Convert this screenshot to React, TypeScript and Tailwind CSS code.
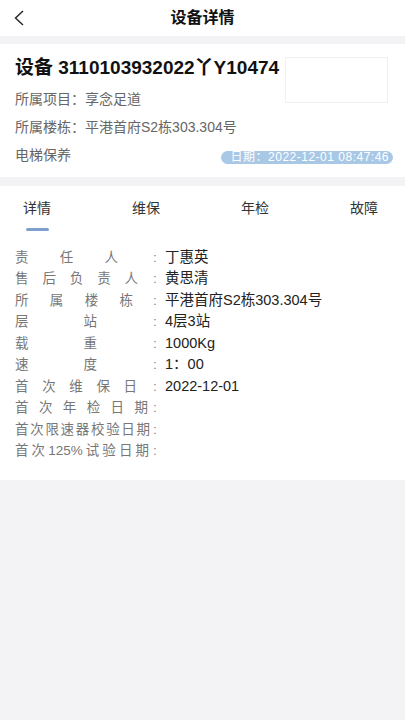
const rows: { chars: string[]; w: number; value: string }[] = [
  { chars: ['责', '任', '人'], w: 103, value: '丁惠英' },
  { chars: ['售', '后', '负', '责', '人'], w: 123, value: '黄思清' },
  { chars: ['所', '属', '楼', '栋'], w: 118, value: '平港首府S2栋303.304号' },
  { chars: ['层', '站'], w: 82, value: '4层3站' },
  { chars: ['载', '重'], w: 82, value: '1000Kg' },
  { chars: ['速', '度'], w: 82, value: '1：00' },
  { chars: ['首', '次', '维', '保', '日'], w: 122, value: '2022-12-01' },
  { chars: ['首', '次', '年', '检', '日', '期'], w: 133, value: '' },
  { chars: ['首', '次', '限', '速', '器', '校', '验', '日', '期'], w: 135, value: '' },
  { chars: ['首', '次', '125%', '试', '验', '日', '期'], w: 134, value: '' },
];

const tabs = ['详情', '维保', '年检', '故障'];

export default function App() {
  return (
    <div
      className="min-h-[720px] w-[405px] bg-[#f3f3f6] text-[#222]"
      style={{ fontFamily: '"Liberation Sans", "Noto Sans CJK SC", sans-serif' }}
    >
      {/* Header */}
      <div className="relative flex h-[36px] items-center justify-center bg-white">
        <svg className="absolute left-[12px] top-[9px]" width="14" height="18" viewBox="0 0 14 18" fill="none">
          <path d="M11 2 L3.5 9 L11 16" stroke="#222" strokeWidth="1.4" strokeLinejoin="miter" />
        </svg>
        <h1 className="text-[16px] font-bold leading-none text-[#111]">设备详情</h1>
      </div>

      {/* Device card */}
      <div className="relative mt-[8px] bg-white px-[15px] pt-[12px] pb-[8px]">
        <div className="absolute left-[285px] top-[13px] h-[46px] w-[103px] border border-[#f1f1f3]" />
        <div className="h-[24px] text-[19px] font-bold leading-[24px] text-[#111]">设备 3110103932022丫Y10474</div>
        <div className="mt-[5px] flex h-[28px] items-center text-[14px] text-[#666]">所属项目：享念足道</div>
        <div className="flex h-[28px] items-center text-[14px] text-[#666]">所属楼栋：平港首府S2栋303.304号</div>
        <div className="flex h-[28px] items-center justify-between text-[14px] text-[#666]">
          <span>电梯保养</span>
          <span className="mt-[4px] mr-[-3px] flex h-[13px] items-center rounded-full bg-[#a8c8e6] pl-[10px] pr-[4px] text-[12px] leading-none tracking-[0.5px] text-white">
            日期：2022-12-01 08:47:46
          </span>
        </div>
      </div>

      {/* Tabs + detail */}
      <div className="mt-[9px] bg-white pb-[18px]">
        <div className="flex justify-between pl-[23px] pr-[27px] pt-[12px]">
          {tabs.map((t, i) => (
            <div key={t} className="flex flex-col items-center">
              <span className="text-[14px] leading-[20px] text-[#333]">{t}</span>
              <div className={`mt-[10px] h-[3px] w-[23px] rounded-full ${i === 0 ? 'bg-[#7f9fcc]' : 'bg-transparent'}`} />
            </div>
          ))}
        </div>

        <div className="mt-[16px] px-[15px] text-[13.5px]">
          {rows.map((r, i) => (
            <div key={i} className="flex h-[21.5px] items-center">
              <div className="flex w-[138px] text-[#777]">
                <div className="flex justify-between" style={{ width: r.w }}>
                  {r.chars.map((c, j) => (
                    <span key={j}>{c}</span>
                  ))}
                </div>
              </div>
              <span className="w-[12px] text-[#888]">:</span>
              <span className="text-[14.5px] text-[#222]">{r.value}</span>
            </div>
          ))}
        </div>
      </div>
    </div>
  );
}
